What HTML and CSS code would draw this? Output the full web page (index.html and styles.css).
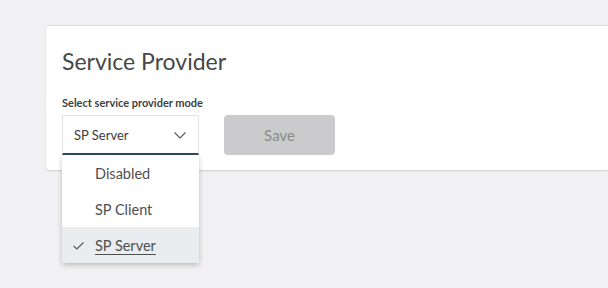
FILE: index.html
```html
<!DOCTYPE html>
<html lang="en">
<head>
<meta charset="utf-8">
<title>Service Provider</title>
<link rel="stylesheet" href="styles.css">
</head>
<body>
<section class="card">
  <h1 class="title">Service Provider</h1>
  <label class="label">Select service provider mode</label>
  <div class="row">
    <div class="select-wrap">
      <div class="select">
        <span class="select-value">SP Server</span>
        <svg class="chevron" width="12" height="7" viewBox="0 0 12 7"><path d="M0.5 0.5 L6 6 L11.5 0.5" fill="none" stroke="#555" stroke-width="1.1"/></svg>
      </div>
      <ul class="menu">
        <li class="option">Disabled</li>
        <li class="option">SP Client</li>
        <li class="option selected">
          <svg class="check" width="11" height="8" viewBox="0 0 11 8"><path d="M0.5 3.8 L3.8 7 L10.5 0.5" fill="none" stroke="#555" stroke-width="1.1"/></svg>
          <span class="option-text">SP Server</span>
        </li>
      </ul>
    </div>
    <button class="save" disabled>Save</button>
  </div>
</section>
</body>
</html>
```
FILE: styles.css
```css
html, body { margin: 0; padding: 0; }
body {
  background: #f1f1f3;
  font-family: Lato, "Open Sans", sans-serif;
  padding: 25px 0 0 46px;
  height: 288px;
  box-sizing: border-box;
  overflow: hidden;
}
.card {
  background: #fff;
  border-top: 1px solid #dcdce0;
  border-radius: 3px 0 0 3px;
  box-shadow: 0 1px 2px rgba(0,0,0,0.14);
  height: 145px;
  padding: 0 16px;
  box-sizing: border-box;
}
.title {
  margin: 0;
  padding-top: 21px;
  font-size: 23px;
  line-height: 28px;
  font-weight: 400;
  color: #474747;
}
.label {
  display: block;
  margin-top: 21px;
  font-size: 11px;
  line-height: 14px;
  font-weight: 700;
  color: #3f3f3f;
}
.row {
  display: flex;
  gap: 25px;
  margin-top: 5px;
}
.select-wrap {
  position: relative;
  width: 137px;
}
.select {
  height: 40px;
  box-sizing: border-box;
  border: 1px solid #e3e3e6;
  border-bottom: 2px solid #2f4b62;
  display: flex;
  align-items: center;
  justify-content: space-between;
  padding: 0 12px 0 11px;
  font-size: 13px;
  color: #3b3b3b;
}
.chevron { margin-top: 1px; }
.menu {
  position: absolute;
  top: 40px;
  left: 0;
  width: 137px;
  margin: 0;
  padding: 0;
  list-style: none;
  background: #fff;
  box-shadow: 0 2px 5px rgba(0,0,0,0.22);
  z-index: 2;
}
.option {
  height: 36px;
  display: flex;
  align-items: center;
  padding-left: 33px;
  font-size: 14.5px;
  color: #4f4f4f;
  position: relative;
}
.option.selected {
  background: #e9edf0;
}
.check {
  position: absolute;
  left: 11px;
  top: 15px;
}
.option-text {
  text-decoration: underline;
  text-underline-offset: 3px;
}
.save {
  width: 111px;
  height: 40px;
  border: none;
  border-radius: 4px;
  background: #cbcbcd;
  color: #8a8a8a;
  font-family: Lato, "Open Sans", sans-serif;
  font-size: 15px;
  padding: 0;
}
```
